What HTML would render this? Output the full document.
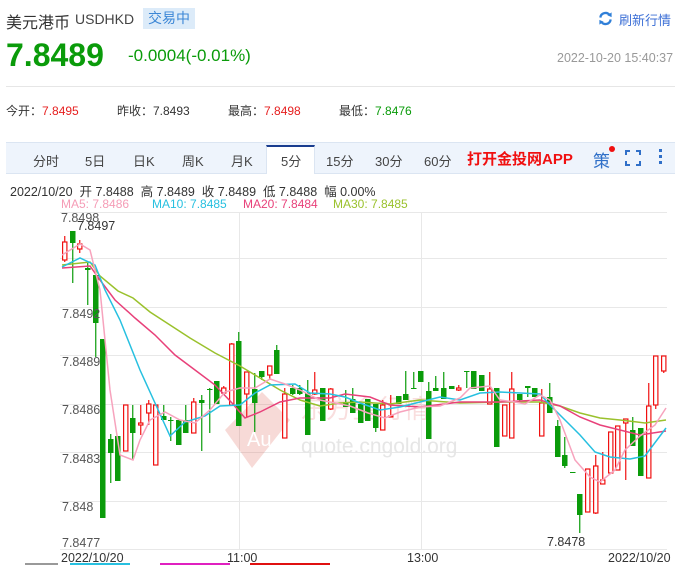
<!DOCTYPE html>
<html><head><meta charset="utf-8">
<style>
*{margin:0;padding:0;box-sizing:border-box}
body{width:681px;height:565px;overflow:hidden;background:#fff;font-family:"Liberation Sans","Noto Sans CJK SC",sans-serif;position:relative;color:#333}
.a{position:absolute;white-space:nowrap}
</style></head><body>
<div class="a" style="left:6px;top:9px;font-size:16px;color:#333">美元港币</div>
<div class="a" style="left:75px;top:11px;font-size:14px;color:#444">USDHKD</div>
<div class="a" style="left:143px;top:8px;width:52px;height:21px;background:#dcebf9;color:#3c87d6;font-size:14px;line-height:21px;text-align:center">交易中</div>
<svg class="a" style="left:598px;top:11px" width="15" height="15" viewBox="0 0 16 16"><path d="M2.5 7A5.5 5.5 0 0 1 12.5 4.5" fill="none" stroke="#2f7fd8" stroke-width="2.4"/><path d="M13.5 9A5.5 5.5 0 0 1 3.5 11.5" fill="none" stroke="#2f7fd8" stroke-width="2.4"/><path d="M10 4.5L14.5 1.5V6.5Z" fill="#2f7fd8"/><path d="M6 11.5L1.5 14.5V9.5Z" fill="#2f7fd8"/></svg>
<div class="a" style="left:619px;top:10px;font-size:13px;color:#3c6fd6">刷新行情</div>
<div class="a" style="left:6px;top:37px;font-size:32px;font-weight:bold;color:#0a9b0a">7.8489</div>
<div class="a" style="left:128px;top:46px;font-size:17px;color:#0a9b0a">-0.0004(-0.01%)</div>
<div class="a" style="left:557px;top:51px;font-size:12.5px;color:#999">2022-10-20 15:40:37</div>
<div class="a" style="left:6px;top:86px;width:669px;height:1px;background:#e6e6e6"></div>
<div class="a" style="left:6px;top:102px;font-size:12px;color:#333">今开：<span style="color:#e61e1e">7.8495</span></div>
<div class="a" style="left:117px;top:102px;font-size:12px;color:#333">昨收：7.8493</div>
<div class="a" style="left:228px;top:102px;font-size:12px;color:#333">最高：<span style="color:#e61e1e">7.8498</span></div>
<div class="a" style="left:339px;top:102px;font-size:12px;color:#333">最低：<span style="color:#0a9b0a">7.8476</span></div>
<div class="a" style="left:6px;top:142px;width:669px;height:32px;background:#eef4fc;border-top:1px solid #dbe5f2;border-bottom:1px solid #dbe5f2"></div>
<div class="a" style="left:266px;top:145px;width:49px;height:29px;background:#fff;border-top:2px solid #1a3d8f;border-left:1px solid #dbe5f2;border-right:1px solid #dbe5f2"></div>
<div class="a" style="top:151px;font-size:13px;color:#444;left:0;width:681px">
<span class="a" style="left:33px">分时</span><span class="a" style="left:85px">5日</span><span class="a" style="left:133px">日K</span><span class="a" style="left:182px">周K</span><span class="a" style="left:231px">月K</span><span class="a" style="left:281px">5分</span><span class="a" style="left:326px">15分</span><span class="a" style="left:375px">30分</span><span class="a" style="left:424px">60分</span></div>
<div class="a" style="left:467px;top:148px;font-size:15px;font-weight:bold;color:#f01010">打开金投网APP</div>
<div class="a" style="left:593px;top:147px;font-size:17px;color:#2f6fc8">策</div>
<div class="a" style="left:609px;top:146px;width:6px;height:6px;border-radius:3px;background:#f01010"></div>
<svg class="a" style="left:625px;top:150px" width="16" height="16"><path d="M1 5V1H5M11 1H15V5M15 11V15H11M5 15H1V11" fill="none" stroke="#2f6fc8" stroke-width="2"/></svg>
<div class="a" style="left:659px;top:149px;width:3px;height:3px;background:#2f6fc8;box-shadow:0 6px #2f6fc8,0 12px #2f6fc8"></div>
<div class="a" style="left:10px;top:181px;font-size:12.5px;color:#333">2022/10/20&nbsp; 开 7.8488&nbsp; 高 7.8489&nbsp; 收 7.8489&nbsp; 低 7.8488&nbsp; 幅 0.00%</div>
<div class="a" style="left:61px;top:197px;font-size:12px"><span style="color:#f59cb6">MA5: 7.8486</span></div>
<div class="a" style="left:152px;top:197px;font-size:12px;color:#27c0e0">MA10: 7.8485</div>
<div class="a" style="left:243px;top:197px;font-size:12px;color:#e8417a">MA20: 7.8484</div>
<div class="a" style="left:333px;top:197px;font-size:12px;color:#9ac12c">MA30: 7.8485</div>
<svg class="a" style="left:0;top:0" width="681" height="565" id="ch">
<g stroke="#e8e8e8" stroke-width="1">
<line x1="60" y1="212.5" x2="667" y2="212.5"/><line x1="60" y1="258.5" x2="667" y2="258.5"/><line x1="60" y1="307.5" x2="667" y2="307.5"/><line x1="60" y1="355.5" x2="667" y2="355.5"/><line x1="60" y1="404.5" x2="667" y2="404.5"/><line x1="60" y1="452.5" x2="667" y2="452.5"/><line x1="60" y1="501.5" x2="667" y2="501.5"/><line x1="60" y1="549.5" x2="667" y2="549.5"/>
<line x1="239.5" y1="212" x2="239.5" y2="549"/><line x1="421.5" y1="212" x2="421.5" y2="549"/>
</g>
<g opacity="0.18"><path d="M225 430L262 392L290 420L252 468Z" fill="#d83a2a"/><text x="247" y="446" font-size="20" fill="#fff" font-family="Liberation Sans">Au</text>
<text x="300" y="418" font-size="26" fill="#e05050" font-family="Noto Sans CJK SC">东方金行情</text></g>
<text x="301" y="453" font-size="21" fill="#e6e6e6" font-family="Liberation Sans">quote.cngold.org</text>
<g id="cd"></g>
<g fill="none" stroke-width="1.5">
<polyline stroke="#9ac12c" points="62,265 90,262 100,276 118,291 133,298 150,312 170,325 190,338 215,353 240,366 260,378 280,390 300,400 320,406 340,403 360,402 390,404 420,400 460,403 500,402 540,402 560,406 580,413 600,418 620,420 645,423 666,420"/>
<polyline stroke="#e8417a" points="62,268 90,266 100,280 115,300 135,318 155,335 175,355 195,370 215,385 232,403 245,418 260,412 280,402 300,398 330,398 345,394 370,397 390,405 420,407 460,402 500,402 540,400 560,406 580,417 600,425 620,430 640,435 666,431"/>
<polyline stroke="#27c0e0" points="62,267 80,258 95,265 105,290 120,320 140,370 155,403 170,436 185,422 205,416 220,406 240,405 255,393 270,385 295,384 310,393 330,394 345,397 360,403 380,410 400,407 420,402 440,397 460,400 480,393 500,392 540,394 550,405 565,420 580,435 595,452 610,457 630,459 645,456 666,428"/>
<polyline stroke="#f7a3bd" points="62,255 80,244 90,250 100,290 110,390 120,455 133,460 140,440 150,420 165,412 180,420 195,423 210,410 225,392 240,388 255,388 270,379 285,384 300,390 320,400 335,403 350,406 368,413 385,418 400,412 420,407 440,406 460,398 470,388 490,386 500,400 515,402 525,404 540,395 550,400 560,420 575,460 590,477 600,482 615,470 625,450 640,436 655,425 666,408"/>
</g>
<g font-family="Liberation Sans" font-size="12.5" fill="#555">
<text x="61" y="222">7.8498</text><text x="62" y="318">7.8492</text><text x="62" y="366">7.8489</text><text x="62" y="414">7.8486</text><text x="62" y="463">7.8483</text><text x="62" y="511">7.848</text><text x="62" y="547">7.8477</text>
<text x="77" y="230" fill="#333">7.8497</text><text x="547" y="546" fill="#333">7.8478</text>
<text x="61" y="562" fill="#333">2022/10/20</text><text x="227" y="562" fill="#333">11:00</text><text x="407" y="562" fill="#333">13:00</text><text x="608" y="562" fill="#333">2022/10/20</text>
</g>
<rect x="25" y="563" width="33" height="2" fill="#999"/><rect x="70" y="563" width="60" height="2" fill="#27c0e0"/><rect x="160" y="563" width="70" height="2" fill="#e020c0"/><rect x="250" y="563" width="80" height="2" fill="#e01010"/>
</svg>
<script>
var D=[
[62,'r',242,260,236,262],[70,'g',231,243,231,283],[77,'r',244,249,240,253],[85,'g',268,270,262,305],[93,'g',275,323,275,357],[100,'g',339,518,339,518],[108,'g',439,453,434,483],[115,'g',436,481,436,481],[123,'r',405,451,405,451],[130,'g',418,433,405,460],[138,'r',423,425,405,435],[146,'r',404,413,400,425],[153,'r',405,465,405,465],[161,'g',416,420,405,420],[168,'g',420,421,417,441],[176,'g',420,445,420,445],[183,'g',420,433,405,433],[191,'r',402,433,398,433],[199,'g',400,403,395,451],[207,'g',389,390,388,433],[214,'g',381,404,381,404],[221,'r',388,393,386,395],[229,'r',344,405,343,405],[236,'g',341,426,332,426],[244,'r',372,394,372,417],[252,'g',389,403,373,432],[259,'g',371,377,371,380],[267,'r',366,375,366,380],[274,'g',350,374,345,374],[282,'r',394,438,388,438],[290,'g',388,394,385,395],[297,'g',388,394,385,395],[305,'g',393,435,380,435],[312,'r',390,394,372,395],[320,'g',388,421,388,421],[328,'r',389,409,388,410],[343,'g',402,407,390,407],[350,'g',399,413,388,413],[358,'g',404,423,404,423],[365,'g',399,421,399,421],[373,'g',404,428,404,432],[380,'r',405,430,400,430],[388,'r',416,417,395,417],[396,'g',396,404,396,404],[403,'g',394,400,371,400],[411,'g',388,389,372,389],[418,'g',371,382,371,382],[426,'g',391,439,382,439],[433,'g',388,391,376,391],[441,'g',388,399,372,399],[449,'g',386,389,386,389],[456,'r',388,390,385,391],[464,'g',371,372,371,388],[471,'g',371,389,371,389],[479,'g',375,391,375,391],[487,'r',389,404,372,404],[494,'g',388,447,388,447],[502,'r',405,436,405,436],[509,'r',389,438,372,438],[517,'g',394,400,394,403],[525,'g',386,388,386,397],[532,'g',388,397,388,397],[539,'r',403,436,389,436],[547,'g',397,413,383,413],[555,'g',426,457,420,457],[562,'g',455,466,437,468],[570,'g',472,473,472,473],[577,'g',494,515,494,533],[585,'r',469,512,469,512],[593,'r',466,513,455,514],[600,'r',480,484,452,484],[608,'r',432,473,432,473],[615,'r',426,470,426,470],[623,'r',419,423,419,480],[630,'g',430,446,417,446],[638,'g',428,476,428,476],[646,'r',406,478,383,478],[653,'r',356,405,356,409],[661,'r',356,371,356,373]];
var s='';D.forEach(function(c){var x=c[0],w=5.5,col=c[1]=='r'?'#f01010':'#0a9b0a',m=x+w/2;
s+='<line x1="'+m+'" x2="'+m+'" y1="'+c[4]+'" y2="'+c[5]+'" stroke="'+col+'" stroke-width="1.2"/>';
var h=Math.max(c[3]-c[2],1);
if(c[1]=='r')s+='<rect x="'+(x+0.6)+'" y="'+c[2]+'" width="'+(w-1.2)+'" height="'+h+'" fill="#fff" stroke="'+col+'" stroke-width="1.2"/>';
else s+='<rect x="'+x+'" y="'+c[2]+'" width="'+w+'" height="'+h+'" fill="'+col+'"/>';});
document.getElementById('cd').innerHTML=s;
</script>
</body></html>
